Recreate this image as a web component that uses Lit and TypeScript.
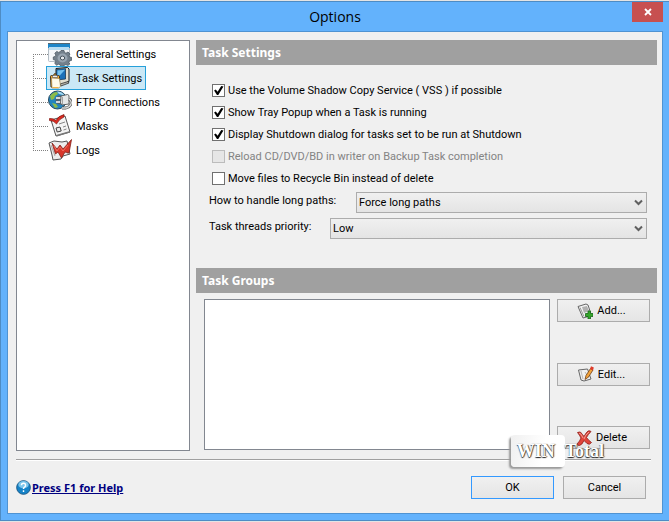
import { LitElement, html, css, svg } from "lit";
import { customElement, property, state } from "lit/decorators.js";
import { classMap } from "lit/directives/class-map.js";

const icons: Record<string, unknown> = {
  general: svg`
    <rect x="0.5" y="1.5" width="21" height="18" rx="1" fill="#f4f7fa" stroke="#b4bdc5"/>
    <path d="M0 2h22v4H0z" fill="#1f86c9"/><path d="M0 1h22v1H0z" fill="#58676f"/>
    <path d="M1 5h20v3H1z" fill="#b9ddf2"/>
    <path d="M13 8.500h3l.5 2 1.500.7 2-1.200 2 2-1 1.700.5 1.300 2.200.5v2.800l-2.200.6-.6 1.400.9 1.800-2 1.400-1.800-1-1.700.6-.6 1.200h-3l-.6-1.500-1.600-.6-1.900 1-1.900-1.900 1-1.700-.5-1.500-1.900-.5v-2.600l2-.6.6-1.400-1.100-1.700 2-1.900 1.800 1 1.500-.6z" fill="#73808c" stroke="#4d5963" stroke-width=".8"/>
    <ellipse cx="14.500" cy="16" rx="5" ry="4.400" fill="#98a5b1"/>
    <ellipse cx="14.500" cy="16" rx="2.200" ry="1.900" fill="#e4e9ed" stroke="#46525c"/>`,
  task: svg`
    <path d="M8 2.500L19.500 1.500 21 3v12.500L13 19l-5-1z" fill="#e2dfd0" stroke="#15181a"/>
    <path d="M8.500 3.500l9-.8V13l-9 1z" fill="#1b71b8" stroke="#163a59" stroke-width=".8"/>
    <path d="M9.500 4.500l7.500-.8L9.500 12z" fill="#72c1ee"/>
    <path d="M12 18l8-2.500 1 1.500-8 3z" fill="#b7b5ab" stroke="#222" stroke-width=".7"/>
    <path d="M2.500 10.500q0-1 1-1h2q.5-2 1.500-2t1.500 2h2q1 0 1 1V17l-1 4H3z" fill="#f7a92b" stroke="#39301f"/>
    <path d="M3.500 12l8 .5 1 8-2 1.500H4z" fill="#fffbe9" stroke="#8d7440" stroke-width=".6"/>
    <path d="M4.500 9.500h5v2h-5z" fill="#eceeef" stroke="#555" stroke-width=".6"/>
    <path d="M4.500 21.500h6" stroke="#f2b544"/>`,
  ftp: svg`
    <circle cx="9.500" cy="10" r="9" fill="#2384bf" stroke="#25485f"/>
    <path d="M2 6q3-4 7-4l1 2-3 2-1 3-3 1zM4 13l4 1 2 3-3 1z" fill="#8dbb48"/>
    <path d="M9 1.500q5 0 7.500 4L11 4z" fill="#a9daf2"/>
    <path d="M13 7q-4 0-4 3t4 3M8 8.500h5M8 12h5" fill="none" stroke="#54606a" stroke-width="3"/>
    <path d="M8 8h5M8 12h5" stroke="#fff" stroke-width="1.500"/>
    <path d="M13 6l6.500-1.500 1.500 1V14l-7 1-1.500-2z" fill="#e6e8e8" stroke="#555" stroke-width=".9"/>
    <path d="M14.500 7v7" stroke="#a3a3a3"/>
    <path d="M21 9q3 2 2 5t-5 4h-4" fill="none" stroke="#555" stroke-width="2.800"/>
    <path d="M21 9q3 2 2 5t-5 4h-4" fill="none" stroke="#d8dada" stroke-width="1.400"/>`,
  masks: svg`
    <path d="M3 6l14-4 5 16-14 4z" fill="#f3f3f3" stroke="#555"/>
    <path d="M8 21l14-4v1.500L9 22.500z" fill="#777"/>
    <path d="M8 14l4-1 1.200 4-4 1z" fill="#ececec" stroke="#444"/>
    <path d="M11 10l6-2M15 13l3-1M15.500 16l3-1" stroke="#888"/>
    <path d="M1.500 4.500Q5 4 8 6.500 10 2 16 .5V3Q11 5 8.500 10 6 6.500 1.500 6.500z" fill="#dc2b20" stroke="#7d1712" stroke-width=".7"/>`,
  logs: svg`
    <path d="M1 5l5-2 8 1 5-1 3 13-7 2-2 3-8 1-1-5z" fill="#ededed" stroke="#555"/>
    <path d="M3 7l4 11M19 12l1 4" stroke="#aaa"/>
    <path d="M4 5l5 6 3-4 3 4 8.500-9.500L21 15l-4-1-3.500 6-3.500-6-2.500 2z" fill="#d8372b" stroke="#81231c" stroke-width=".8"/>
    <path d="M6 8l3 5 3-4 3 4 5-6" fill="none" stroke="#f07163"/>`,
  add: svg`
    <path d="M1 3.500l8-2.500 2 1 3 9-1 2-7 2z" fill="#f2f2f2" stroke="#666"/>
    <path d="M5 4l5-1 2 5-5 2z" fill="#b0b0b0"/><path d="M3 4.500l4 9" stroke="#999"/>
    <path d="M11 8h2.500v2.500H16v3h-2.500V16H11v-2.500H8.500v-3H11z" fill="#35a62a" stroke="#17641a" stroke-width=".8"/>`,
  edit: svg`
    <path d="M.5 4l9-1 3.500 10-7 2-3-1z" fill="#f0f0f0" stroke="#666"/>
    <path d="M3 5l2 8M7 6l4 6" stroke="#bbb"/>
    <path d="M7 13.500l1-4 4.500-7L15 4l-4.500 7z" fill="#f3a33a" stroke="#704018" stroke-width=".8"/>
    <path d="M12 3l1-2.700 2.800 1.200L15 4.500z" fill="#df3b2b"/>`,
  remove: svg`
    <path d="M1.500 2.500q3-2 5 2l1.500 2q2-4 4-5.500 2-.5 3 .5-3 3-4.500 6 2 3 5 5-2 3-4.500 1L8 10.500Q6 15 3.500 15.500 1 15.500 1 14q3-3 4-6Q3.500 5 1.500 2.500z" fill="#e0443a" stroke="#8c201b" stroke-width=".8"/>
    <path d="M3 3q2 0 4 5M13 2Q9 5 8 9" fill="none" stroke="#f49c93"/>`,
  help: svg`
    <circle cx="8" cy="8" r="7.300" fill="#1583c8" stroke="#175786"/>
    <ellipse cx="8" cy="5" rx="5.500" ry="4" fill="#7cc6ec"/>
    <path d="M5.800 5.500q0-2 2.200-2t2.200 2Q10.200 6.800 9 7.500 8 8 8 9.500M8 11v1.700" fill="none" stroke="#fff" stroke-width="1.500"/>`,
  close: svg`<path d="M1 1l6 6M7 1L1 7" stroke="#fff" stroke-width="1.800"/>`,
};

@customElement("app-icon")
class AppIcon extends LitElement {
  @property() name = "";
  @property({ type: Number }) box = 24;
  static styles = css`
    :host { display: block; flex: none; }
    svg { display: block; width: 100%; height: 100%; }
  `;
  render() {
    return html`<svg viewBox="0 0 ${this.box} ${this.box}" aria-hidden="true">${icons[this.name]}</svg>`;
  }
}

@customElement("app-root")
class AppRoot extends LitElement {
  @state() private page = "task";

  private pages = [
    ["general", "General Settings"],
    ["task", "Task Settings"],
    ["ftp", "FTP Connections"],
    ["masks", "Masks"],
    ["logs", "Logs"],
  ];

  private checks = [
    { label: "Use the Volume Shadow Copy Service ( VSS ) if possible", on: true },
    { label: "Show Tray Popup when a Task is running", on: true },
    { label: "Display Shutdown dialog for tasks set to be run at Shutdown", on: true },
    { label: "Reload CD/DVD/BD in writer on Backup Task completion", on: false, off: true },
    { label: "Move files to Recycle Bin instead of delete", on: false },
  ];

  static styles = css`
    :host {
      display: block;
      box-sizing: border-box;
      padding: 1px 0;
      background: #e4e4e4;
      color: #000;
      font: 11px/17px Roboto, sans-serif;
    }
    * { box-sizing: border-box; }
    .window {
      background: #63b2fc;
      border: 1px solid #4e8cc4;
      border-right-width: 0;
      padding: 0 6px 6px;
    }
    .titlebar {
      display: grid;
      grid-template-columns: 31px 1fr 31px;
      height: 29px;
    }
    .title {
      grid-column: 2;
      margin: 0;
      text-align: center;
      font: 14px/30px "Open Sans", sans-serif;
    }
    .close {
      display: flex;
      align-items: center;
      justify-content: center;
      height: 20px;
      padding: 0;
      border: 0;
      background: #c75050;
    }
    .close app-icon { width: 8px; height: 8px; }
    .client {
      border: 1px solid #4f93d2;
      background: #f0f0f0;
      padding: 8px 5px 14px 8px;
    }
    .body {
      display: grid;
      grid-template-columns: 174px 1fr;
      gap: 6px;
    }
    .tree {
      border: 1px solid #828790;
      background: #fff;
      padding: 1px 0 0 16px;
    }
    .list { list-style: none; margin: 0; padding: 0; }
    .node {
      display: flex;
      align-items: center;
      height: 24px;
      background:
        repeating-linear-gradient(to right, #808080 0 1px, transparent 1px 2px) 0 12px / 15px 1px no-repeat,
        repeating-linear-gradient(to bottom, #808080 0 1px, transparent 1px 2px) 0 0 / 1px 100% no-repeat;
    }
    .node:first-child { background-position: 0 12px, 0 12px; }
    .node:last-child { background-size: 15px 1px, 1px 12px; }
    .item {
      display: flex;
      align-items: center;
      gap: 4px;
      height: 24px;
      margin-left: 13px;
      padding: 0 3px 0 1px;
      border: 1px solid transparent;
      background: none;
      color: inherit;
      font: inherit;
    }
    .item app-icon { width: 24px; height: 24px; }
    .item.selected { background: #cbe8f6; border-color: #26a0da; }
    .heading {
      margin: 0;
      padding: 0 6px;
      background: #a0a0a0;
      color: #fff;
      font: bold 12px/25px "Noto Sans", sans-serif;
    }
    .options {
      display: grid;
      gap: 1px;
      padding: 15px 10px 3px 16px;
    }
    .check {
      display: flex;
      align-items: center;
      gap: 3px;
      height: 21px;
    }
    .check.disabled { color: #838383; }
    .box {
      appearance: none;
      flex: none;
      width: 13px;
      height: 13px;
      margin: 0;
      border: 1px solid #707070;
      background: #fff;
    }
    .box:disabled { border-color: #bcbcbc; background: #e6e6e6; }
    .box:checked::before {
      content: "";
      display: block;
      width: 11px;
      height: 11px;
      background: #000;
      clip-path: polygon(10% 50%, 25% 40%, 42% 62%, 75% 8%, 95% 14%, 48% 92%, 36% 92%);
    }
    .fields {
      display: grid;
      gap: 5px;
      padding: 0 10px 29px 13px;
    }
    .field { display: flex; align-items: flex-start; }
    .field label { width: 147px; flex: none; }
    .field.narrow label { width: 121px; }
    .combo { position: relative; flex: 1; display: flex; }
    .combo select {
      appearance: none;
      width: 100%;
      height: 21px;
      padding: 0 2px;
      border: 1px solid #acacac;
      border-radius: 0;
      background: linear-gradient(#f0f0f0, #e4e4e4);
      color: #000;
      font: inherit;
    }
    .combo svg {
      position: absolute;
      right: 4px;
      top: 7px;
      width: 9px;
      height: 7px;
      pointer-events: none;
    }
    .groups {
      display: grid;
      grid-template-columns: 1fr 93px;
      gap: 7px;
      padding: 6px 7px 1px 8px;
    }
    .listbox {
      min-height: 151px;
      border: 1px solid #828790;
      background: #fff;
    }
    .actions {
      display: flex;
      flex-direction: column;
      justify-content: space-between;
      padding-bottom: 1px;
    }
    .push {
      display: flex;
      align-items: center;
      justify-content: center;
      gap: 4px;
      height: 23px;
      padding: 0 4px 0 0;
      border: 1px solid #acacac;
      background: linear-gradient(#f0f0f0, #e5e5e5);
      color: #000;
      font: inherit;
    }
    .push app-icon { width: 16px; height: 16px; }
    .footer {
      position: relative;
      display: flex;
      align-items: center;
      gap: 9px;
      margin: 8px 6px 0 0;
      padding: 16px 5px 0 0;
      border-top: 1px solid #a0a0a0;
      box-shadow: inset 0 1px #fff;
    }
    .footer .push { width: 83px; padding: 0; }
    .footer .push.default { border-color: #3399ff; }
    .help {
      display: flex;
      align-items: center;
      gap: 1px;
      margin-right: auto;
      color: #000080;
      font: bold 11px/16px "Noto Sans", sans-serif;
    }
    .help app-icon { width: 15px; height: 15px; }
    .mark {
      position: absolute;
      right: 47px;
      top: -27px;
      display: flex;
      align-items: center;
      height: 36px;
      font: bold 18px/32px "Liberation Serif", serif;
      color: #fff;
      text-shadow: 0 1px 1px #222, 1px 0 1px #555;
      pointer-events: none;
    }
    .plate {
      width: 54px;
      height: 32px;
      padding-left: 6px;
      border-radius: 4px;
      background: linear-gradient(100deg, #f0f0f0, #ffffff 60%);
      box-shadow: -2px 2px 2px #999;
    }
  `;

  private combo(id: string, label: string, value: string, narrow = false) {
    return html`<div class=${classMap({ field: true, narrow })}>
      <label for=${id}>${label}</label>
      <span class="combo">
        <select id=${id}><option>${value}</option></select>
        <svg viewBox="0 0 9 7" aria-hidden="true"><path d="M1 1.500l3.500 3.500L8 1.500" fill="none" stroke="#606060" stroke-width="2"/></svg>
      </span>
    </div>`;
  }

  private push(icon: string, label: string) {
    return html`<button class="push"><app-icon name=${icon} box="16"></app-icon>${label}</button>`;
  }

  render() {
    return html`<div class="window">
      <header class="titlebar">
        <h1 class="title">Options</h1>
        <button class="close" aria-label="Close"><app-icon name="close" box="8"></app-icon></button>
      </header>
      <main class="client">
        <div class="body">
          <nav class="tree"><ul class="list">
            ${this.pages.map(([id, label]) => html`<li class="node">
              <button class=${classMap({ item: true, selected: this.page === id })} @click=${() => (this.page = id)}>
                <app-icon name=${id}></app-icon>${label}
              </button>
            </li>`)}
          </ul></nav>
          <div>
            <h2 class="heading">Task Settings</h2>
            <div class="options">
              ${this.checks.map((c) => html`<label class=${classMap({ check: true, disabled: !!c.off })}>
                <input class="box" type="checkbox" .checked=${c.on} ?disabled=${!!c.off}><span>${c.label}</span>
              </label>`)}
            </div>
            <div class="fields">
              ${this.combo("paths", "How to handle long paths:", "Force long paths")}
              ${this.combo("priority", "Task threads priority:", "Low", true)}
            </div>
            <h2 class="heading">Task Groups</h2>
            <div class="groups">
              <div class="listbox" role="listbox" aria-label="Task Groups"></div>
              <div class="actions">
                ${this.push("add", "Add...")}${this.push("edit", "Edit...")}${this.push("remove", "Delete")}
              </div>
            </div>
          </div>
        </div>
        <footer class="footer">
          <a class="help" href="#help"><app-icon name="help" box="16"></app-icon><span>Press F1 for Help</span></a>
          <button class="push default">OK</button>
          <button class="push">Cancel</button>
          <div class="mark"><span class="plate">WIN</span><span>Total</span></div>
        </footer>
      </main>
    </div>`;
  }
}
